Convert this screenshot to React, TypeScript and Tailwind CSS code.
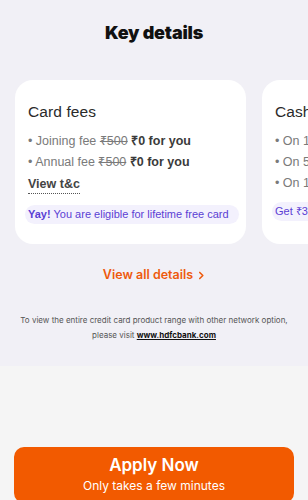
export default function App() {
  const cards = [
    {
      id: 1,
      title: 'Card fees',
      rows: [
        { label: 'Joining fee', old: '₹500', now: '₹0 for you' },
        { label: 'Annual fee', old: '₹500', now: '₹0 for you' },
      ],
      link: 'View t&c',
      note: 'You are eligible for lifetime free card',
    },
    {
      id: 2,
      title: 'Cashback',
      rows: [
        { label: 'On 10X rewards', old: '', now: '' },
        { label: 'On 5% cashback', old: '', now: '' },
        { label: 'On 1% cashback', old: '', now: '' },
      ],
      link: '',
      note: 'Get ₹3,000 cashback',
    },
  ];

  return (
    <div className="w-[308px] h-[500px] overflow-hidden bg-[#f5f5f5] font-['Inter',sans-serif] flex flex-col">
      <div className="bg-[#f1f0f6] h-[366px] shrink-0 flex flex-col">
        {/* Header */}
        <h1 className="text-center text-[18px] font-black text-[#111] tracking-[-0.2px] pt-[22px] leading-[22px]">
          Key details
        </h1>

        {/* Cards */}
        <div className="flex gap-4 pl-[15px] mt-[36px] overflow-hidden font-['Liberation_Sans',Arial,sans-serif]">
          {cards.map((card) => (
            <div
              key={card.id}
              className="w-[231px] h-[164px] shrink-0 bg-white rounded-[18px] px-[13px] pt-[22px]"
            >
              <h3 className="text-[15.5px] text-[#2a2a2a] leading-[20px] tracking-[0.1px]">{card.title}</h3>
              <div className="mt-[10px] flex flex-col gap-[3px]">
                {card.rows.map((row) => (
                  <p key={row.label} className="text-[12.5px] text-[#7a7a7a] leading-[18px] whitespace-nowrap">
                    • {row.label}{' '}
                    {row.old && <span className="line-through">{row.old}</span>}{' '}
                    {row.now && <span className="font-bold text-[#3a3a3a]">{row.now}</span>}
                  </p>
                ))}
              </div>
              {card.link && (
                <p className="mt-[4px] text-[12.5px] font-bold text-[#444] leading-[18px]">
                  <span className="border-b border-dotted border-[#555] pb-[2px]">{card.link}</span>
                </p>
              )}
              <div
                className={`${card.link ? 'mt-[12px]' : 'mt-[10px]'} inline-block bg-[#f3f1fd] rounded-full pl-[3px] pr-[10px] -ml-[3px] py-[1px] text-[11px] text-[#5b3fd4] leading-[17px] whitespace-nowrap`}
              >
                {card.link ? (
                  <>
                    <span className="font-bold">Yay!</span> {card.note}
                  </>
                ) : (
                  card.note
                )}
              </div>
            </div>
          ))}
        </div>

        {/* View all */}
        <div className="mt-[22px] flex justify-center items-center gap-[5px] text-[#ee5a0d] text-[12.5px] font-semibold">
          <span>View all details</span>
          <svg width="7" height="9" viewBox="0 0 8 10" fill="none">
            <path d="M2 1.5L5.5 5L2 8.5" stroke="#ee5a0d" strokeWidth="1.8" strokeLinecap="round" strokeLinejoin="round" />
          </svg>
        </div>

        {/* Footer note */}
        <div className="mt-[28px] text-center text-[8px] text-[#555] leading-[15px] whitespace-nowrap">
          <p>To view the entire credit card product range with other network option,</p>
          <p>
            please visit <span className="font-bold text-[#111] underline">www.hdfcbank.com</span>
          </p>
        </div>
      </div>

      {/* Apply */}
      <div className="flex-1 flex flex-col justify-end px-[14px]">
        <button className="w-full h-[56px] -mb-[3px] bg-[#f25a00] rounded-[10px] text-white flex flex-col items-center pt-[7px]">
          <span className="text-[17px] font-semibold leading-[22px]">Apply Now</span>
          <span className="text-[12px] leading-[18px] mt-[1px]">Only takes a few minutes</span>
        </button>
      </div>
    </div>
  );
}
